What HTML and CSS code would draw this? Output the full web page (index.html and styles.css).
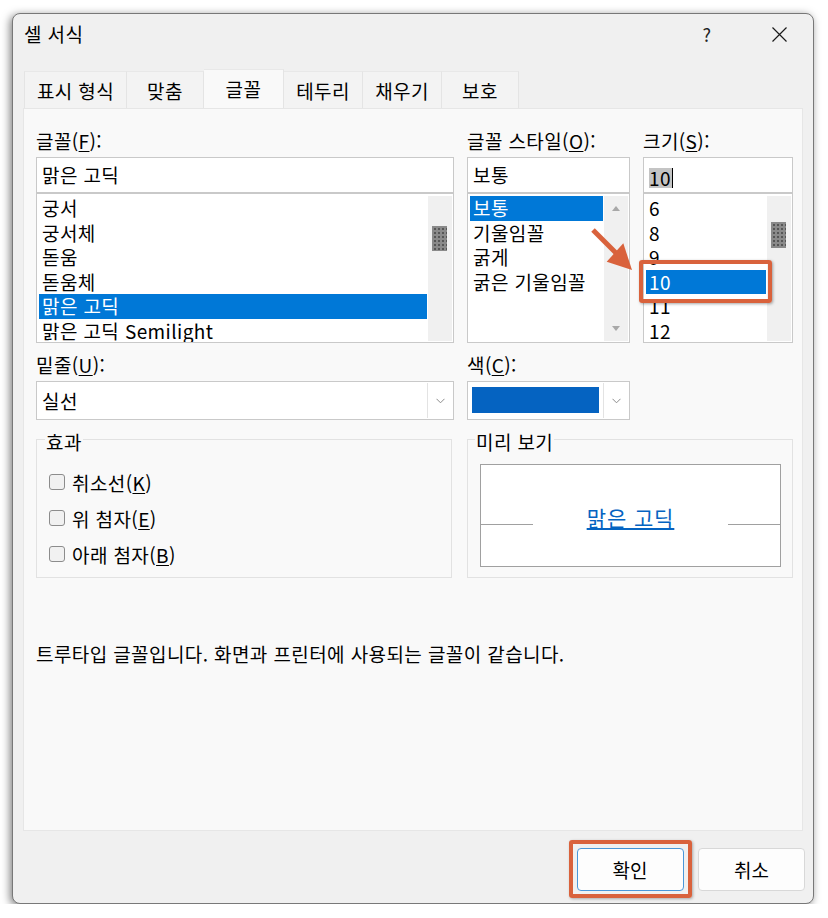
FILE: index.html
```html
<!DOCTYPE html>
<html lang="ko">
<head>
<meta charset="utf-8">
<title>셀 서식</title>
<link rel="stylesheet" href="styles.css">
</head>
<body>
<div class="window">
  <div class="titlebar">
    <span class="title">셀 서식</span>
    <span class="tb-btn tb-help">?</span>
    <span class="tb-btn"><svg width="15" height="15" viewBox="0 0 15 15"><path d="M0.5 0.5 L14.5 14.5 M14.5 0.5 L0.5 14.5" stroke="#1a1a1a" stroke-width="1.2" fill="none"/></svg></span>
  </div>
  <div class="tabs">
    <div class="tab tab-first">표시 형식</div>
    <div class="tab">맞춤</div>
    <div class="tab active">글꼴</div>
    <div class="tab">테두리</div>
    <div class="tab">채우기</div>
    <div class="tab">보호</div>
  </div>
  <div class="panel">
    <div class="top-grid">
      <div class="col">
        <div class="label">글꼴(<u>F</u>):</div>
        <div class="input">맑은 고딕</div>
        <div class="list">
          <div class="items">
            <div class="item">궁서</div>
            <div class="item">궁서체</div>
            <div class="item">돋움</div>
            <div class="item">돋움체</div>
            <div class="item sel">맑은 고딕</div>
            <div class="item">맑은 고딕 Semilight</div>
          </div>
          <div class="scroll"><div class="thumb thumb-font"></div></div>
        </div>
      </div>
      <div class="col">
        <div class="label">글꼴 스타일(<u>O</u>):</div>
        <div class="input">보통</div>
        <div class="list">
          <div class="items">
            <div class="item sel">보통</div>
            <div class="item">기울임꼴</div>
            <div class="item">굵게</div>
            <div class="item">굵은 기울임꼴</div>
          </div>
          <div class="scroll scroll-arrows"><span class="tri-up"></span><span class="tri-down"></span></div>
        </div>
      </div>
      <div class="col">
        <div class="label">크기(<u>S</u>):</div>
        <div class="input"><span class="input-sel">10</span></div>
        <div class="list">
          <div class="items">
            <div class="item">6</div>
            <div class="item">8</div>
            <div class="item">9</div>
            <div class="item sel">10</div>
            <div class="item">11</div>
            <div class="item">12</div>
          </div>
          <div class="scroll"><div class="thumb thumb-size"></div></div>
        </div>
      </div>
    </div>

    <div class="mid-grid">
      <div class="col">
        <div class="label">밑줄(<u>U</u>):</div>
        <div class="combo">
          <span class="combo-text">실선</span>
          <span class="combo-btn"><svg width="9" height="6" viewBox="0 0 9 6"><path d="M0.5 0.8 L4.5 4.8 L8.5 0.8" stroke="#8c8c8c" stroke-width="1" fill="none"/></svg></span>
        </div>
      </div>
      <div class="col">
        <div class="label">색(<u>C</u>):</div>
        <div class="combo">
          <span class="swatch"></span>
          <span class="combo-btn"><svg width="9" height="6" viewBox="0 0 9 6"><path d="M0.5 0.8 L4.5 4.8 L8.5 0.8" stroke="#8c8c8c" stroke-width="1" fill="none"/></svg></span>
        </div>
      </div>
    </div>

    <div class="groups">
      <div class="group">
        <div class="group-title">효과</div>
        <div class="checks">
          <div class="check-row"><span class="checkbox"></span><span>취소선(<u>K</u>)</span></div>
          <div class="check-row"><span class="checkbox"></span><span>위 첨자(<u>E</u>)</span></div>
          <div class="check-row"><span class="checkbox"></span><span>아래 첨자(<u>B</u>)</span></div>
        </div>
      </div>
      <div class="group">
        <div class="group-title group-title-preview">미리 보기</div>
        <div class="preview">
          <span class="pv-line"></span>
          <span class="pv-text">맑은 고딕</span>
          <span class="pv-line"></span>
        </div>
      </div>
    </div>

    <p class="note">트루타입 글꼴입니다. 화면과 프린터에 사용되는 글꼴이 같습니다.</p>

    <div class="mark-box"></div>
    <svg class="mark-arrow" width="60" height="60" viewBox="0 0 60 60">
      <line x1="8" y1="8" x2="31" y2="31" stroke="#d9623c" stroke-width="5"/>
      <polygon points="21.7,39.7 47,48 38.3,21.3" fill="#d9623c"/>
    </svg>
  </div>
  <div class="buttons">
    <div class="btn-mark"><button class="btn btn-default">확인</button></div>
    <button class="btn">취소</button>
  </div>
</div>
</body>
</html>
```

FILE: styles.css
```css
* { box-sizing: border-box; }

body {
  margin: 0;
  background: #ffffff;
  font-family: "Noto Sans CJK KR", "Noto Sans", sans-serif;
  font-size: 19px;
  letter-spacing: 0.4px;
  color: #000;
}

u { text-underline-offset: 2px; }

.window {
  margin: 13px 0 0 12px;
  width: 802px;
  height: 891px;
  border: 1px solid #787878;
  border-radius: 8px;
  background: #f0f0f0;
  box-shadow: -2px 2px 8px rgba(0, 0, 0, 0.5);
  display: flex;
  flex-direction: column;
  overflow: hidden;
}

/* title bar */
.titlebar {
  height: 55px;
  flex: none;
  display: flex;
  align-items: flex-start;
  padding: 10px 11px 0 11px;
  line-height: 20px;
}
.title { flex: 1; }
.tb-btn {
  width: 46px;
  height: 20px;
  display: flex;
  align-items: center;
  justify-content: center;
}
.tb-help { margin-right: 26px; color: #222; font-size: 18px; }

/* tabs */
.tabs {
  flex: none;
  display: grid;
  grid-template-columns: 103px 77px 80px 79px 79px 77px;
  height: 39px;
  align-items: end;
  padding-left: 11px;
}
.tab {
  height: 37px;
  background: #f3f3f3;
  border-right: 1px solid #e4e4e4;
  border-top: 1px solid #e8e8e8;
  display: flex;
  align-items: center;
  justify-content: center;
  white-space: nowrap;
}
.tab-first { border-left: 1px solid #e4e4e4; }
.tab.active {
  height: 39px;
  background: #f9f9f9;
  padding-bottom: 2px;
}

/* panel */
.panel {
  position: relative;
  flex: none;
  height: 723px;
  margin: 0 10px;
  background: #f9f9f9;
  border: 1px solid #e6e6e6;
  padding: 21px 9px 0 12px;
}

.top-grid {
  display: grid;
  grid-template-columns: 418px 163px 150px;
  column-gap: 13px;
}
.label {
  height: 22px;
  line-height: 22px;
  margin-bottom: 5px;
  white-space: nowrap;
}
.input {
  height: 36px;
  border: 1px solid #c9c9c9;
  background: #fff;
  padding-left: 5px;
  line-height: 34px;
}
.input-sel {
  display: inline-block;
  line-height: 20px;
  background: #c4c4c4;
  border-right: 1px solid #000;
  vertical-align: middle;
  padding-right: 1px;
}

.list {
  height: 150px;
  border: 1px solid #c9c9c9;
  background: #fff;
  display: flex;
}
.items {
  flex: 1;
  min-width: 0;
  padding: 2px 0 0 2px;
  overflow: hidden;
}
.item {
  height: 24.5px;
  line-height: 24.5px;
  padding-left: 3px;
  white-space: nowrap;
}
.item.sel { background: #0078d7; color: #fff; }

.scroll {
  width: 24px;
  flex: none;
  margin: 2px 1.5px 1.5px 1px;
  background: #f0f0f0;
}
.thumb {
  width: 15px;
  margin: 0 auto;
  background-color: #8a8a8a;
  background-image: radial-gradient(circle, #3a3a3a 0.6px, transparent 0.9px);
  background-size: 4px 4px;
  background-position: 1px 1px;
}
.thumb-font { margin-top: 30px; height: 25px; }
.thumb-size { margin-top: 26px; height: 26px; }

.scroll-arrows {
  display: flex;
  flex-direction: column;
  justify-content: space-between;
  align-items: center;
  padding: 10px 0 10px;
}
.tri-up, .tri-down {
  width: 0;
  height: 0;
  border-left: 4px solid transparent;
  border-right: 4px solid transparent;
}
.tri-up { border-bottom: 5px solid #a8a8a8; }
.tri-down { border-top: 5px solid #a8a8a8; }

/* underline / color */
.mid-grid {
  margin-top: 11px;
  display: grid;
  grid-template-columns: 418px 163px;
  column-gap: 13px;
}
.combo {
  height: 39px;
  border: 1px solid #c9c9c9;
  background: #fff;
  display: flex;
}
.combo-text {
  flex: 1;
  padding-left: 5px;
  line-height: 37px;
}
.combo-btn {
  width: 25px;
  flex: none;
  margin: 1px 1px 1px auto;
  border-left: 1px solid #e3e3e3;
  display: flex;
  align-items: center;
  justify-content: center;
}
.swatch {
  width: 127px;
  height: 26px;
  margin: 5px 0 0 4px;
  background: #0563c1;
}

/* groups */
.groups {
  margin-top: 19px;
  display: grid;
  grid-template-columns: 416px 326px;
  column-gap: 15px;
}
.group {
  border: 1px solid #e2e2e2;
}
.group-title {
  margin: -9px 0 0 8px;
  width: fit-content;
  padding: 0 1px;
  background: #f9f9f9;
  line-height: 22px;
  height: 22px;
}
.group-title-preview { margin-left: 7px; }
.checks {
  margin-top: 11px;
  padding-bottom: 5px;
}
.check-row {
  height: 36px;
  display: flex;
  align-items: center;
  gap: 7px;
  padding-left: 12px;
}
.checkbox {
  width: 16px;
  height: 16px;
  border: 1px solid #8c8c8c;
  border-radius: 3px;
  background: #f1f1f1;
}

.preview {
  margin: 11px 11px 10px 12px;
  height: 103px;
  border: 1px solid #a0a0a0;
  background: #fff;
  display: flex;
  justify-content: space-between;
  align-items: flex-start;
}
.pv-line {
  width: 52px;
  height: 1px;
  margin-top: 59px;
  background: #a0a0a0;
}
.pv-text {
  margin-top: 39px;
  font-size: 21px;
  letter-spacing: 0.9px;
  line-height: 26px;
  color: #0563c1;
  text-decoration: underline;
  text-underline-offset: 2px;
}

.note {
  margin: 65px 0 0 0;
  line-height: 22px;
}

/* annotation overlays */
.mark-box {
  position: absolute;
  left: 615px;
  top: 151px;
  width: 133px;
  height: 43px;
  border: 4.5px solid #d9623c;
  border-radius: 3px;
  box-shadow: 1px 1px 3px rgba(0, 0, 0, 0.35);
}
.mark-arrow {
  position: absolute;
  left: 561px;
  top: 113px;
}

/* buttons */
.buttons {
  flex: none;
  height: 72px;
  display: flex;
  justify-content: flex-end;
  align-items: flex-start;
  gap: 15px;
  padding: 17px 8px 0 0;
}
.btn-mark {
  margin: -8px -9px 0 -8px;
  padding: 3.5px 4.5px 3.5px 3.5px;
  border: 4.5px solid #d9623c;
  border-radius: 3px;
  box-shadow: 1px 1px 3px rgba(0, 0, 0, 0.3);
}
.btn {
  width: 107px;
  height: 43px;
  border-radius: 4px;
  background: #fdfdfd;
  border: 1px solid #d8d8d8;
  font: inherit;
  color: #000;
  display: flex;
  align-items: center;
  justify-content: center;
  padding: 0;
}
.btn-default {
  border-color: #4a97d9;
}
```
